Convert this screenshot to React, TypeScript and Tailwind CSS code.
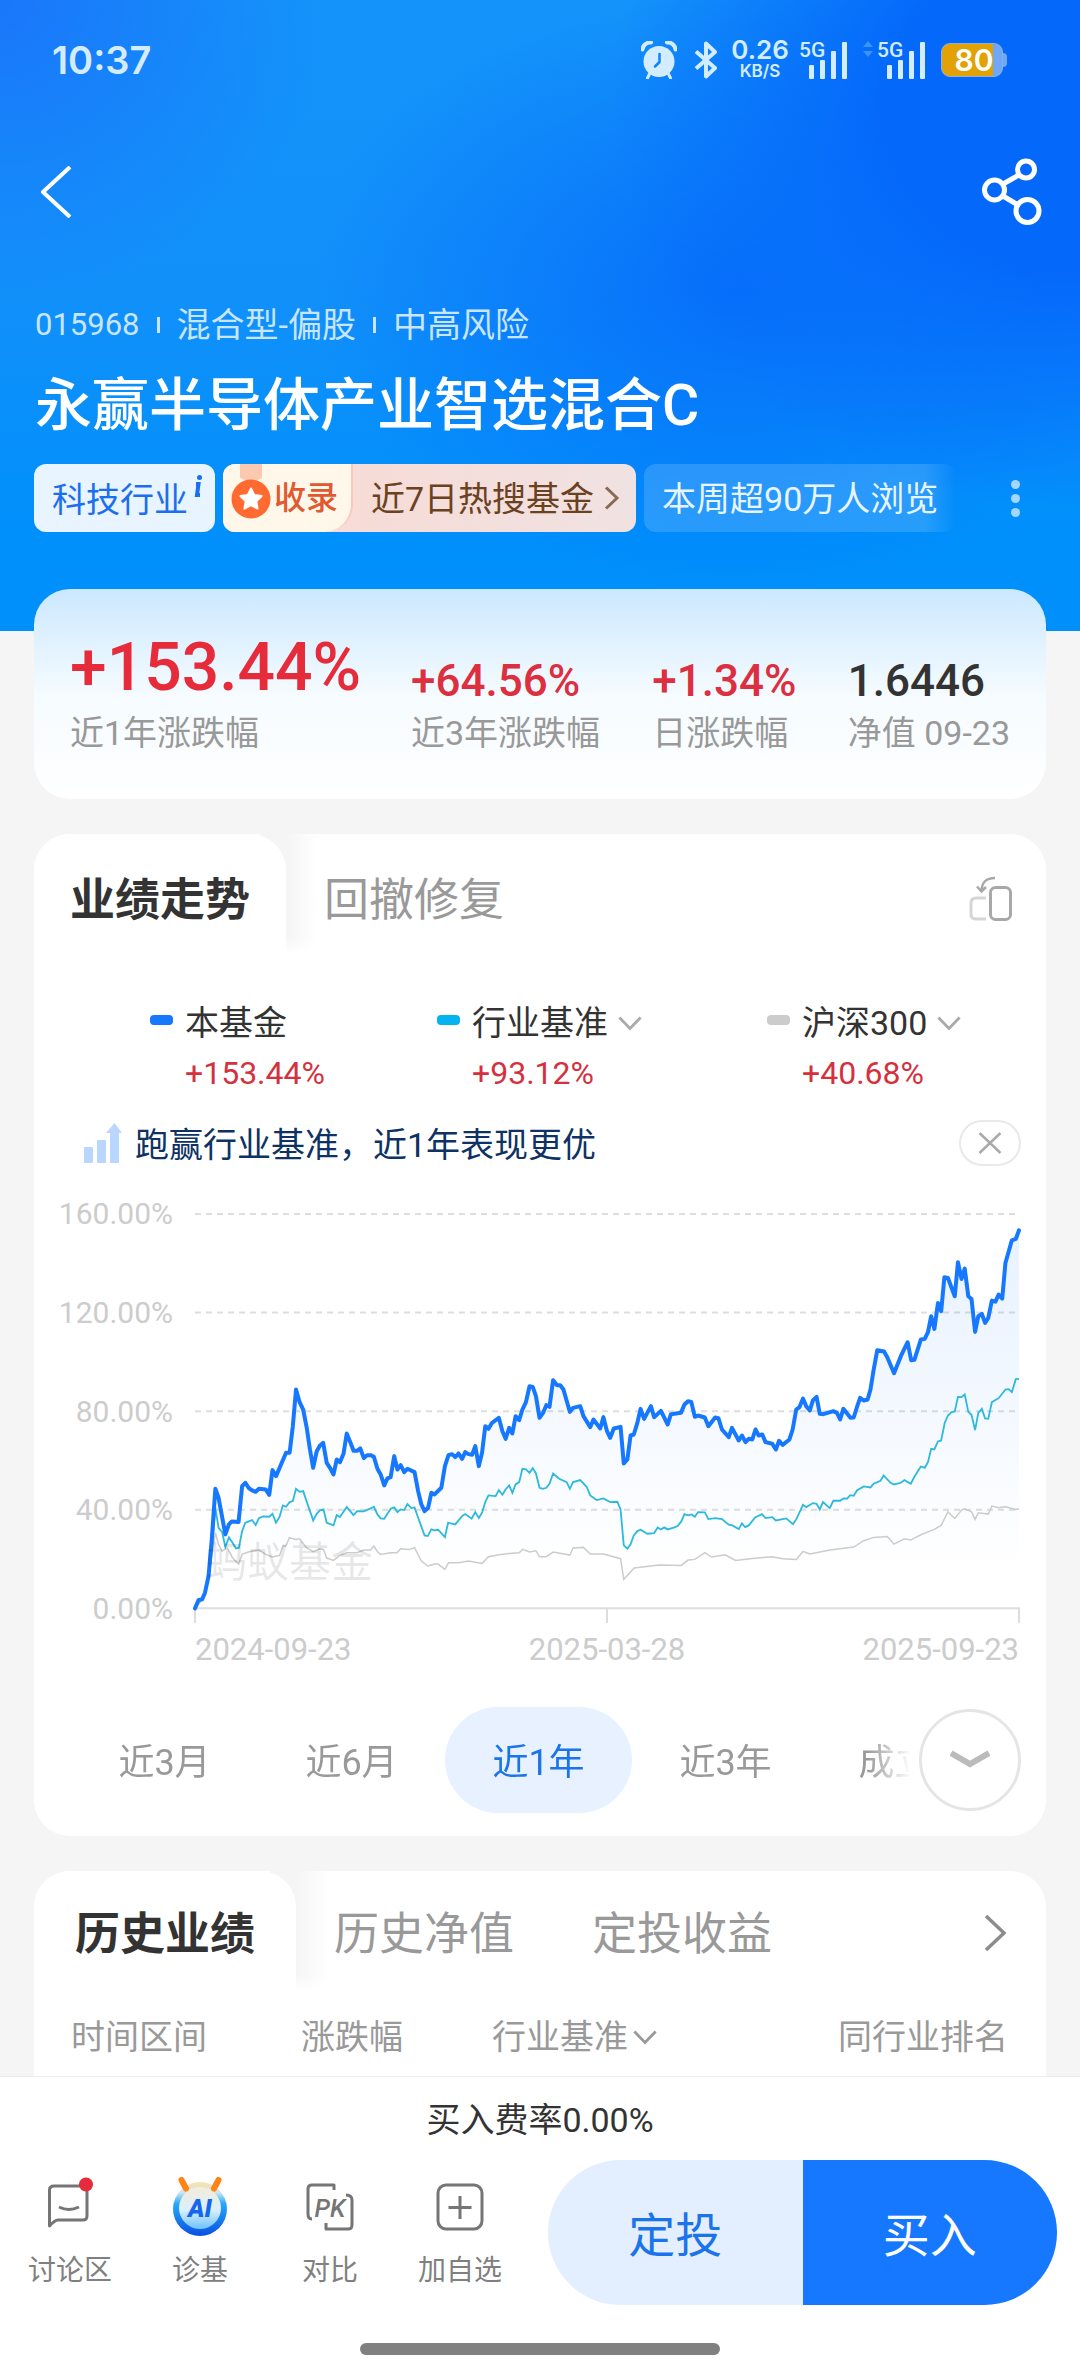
import React from 'react';
import clsx from 'clsx';

const FUND_LINE =
  '0,1287 10,1262 20,1260 28,1240 38,1190 47,1080 57,928 66,955 85,1065 95,1035 103,1026 122,1028 132,920 141,910 150,925 160,933 170,937 179,928 198,930 208,946 217,872 227,890 255,820 265,820 274,740 283,630 293,668 303,690 313,745 322,810 331,865 341,815 350,798 359,790 369,850 378,865 388,885 397,840 406,848 416,823 425,762 435,788 444,814 454,814 463,807 473,836 482,827 492,827 501,832 511,868 520,885 530,918 539,897 548,893 558,830 567,870 576,857 586,878 595,868 615,878 625,935 634,975 643,995 653,985 662,940 671,945 690,925 700,860 710,827 720,824 729,833 738,822 748,838 757,818 766,824 776,826 785,800 795,860 804,820 813,740 822,748 832,730 851,715 861,755 870,778 880,745 889,762 898,710 908,722 917,690 927,668 937,620 946,622 955,650 965,715 975,700 984,677 993,682 1003,602 1014,617 1023,617 1032,630 1050,697 1059,685 1079,680 1088,710 1107,743 1116,720 1135,747 1144,713 1154,755 1163,775 1173,747 1192,742 1201,852 1211,840 1220,768 1229,765 1239,730 1248,688 1258,718 1277,680 1286,713 1305,694 1324,735 1333,704 1361,700 1371,675 1381,665 1390,667 1400,712 1409,708 1428,714 1438,740 1457,714 1466,716 1476,750 1495,773 1504,745 1523,783 1532,768 1542,788 1551,778 1561,780 1570,750 1579,768 1589,765 1598,788 1617,793 1627,810 1636,784 1646,796 1665,780 1674,750 1684,690 1693,683 1703,657 1712,680 1722,693 1731,662 1741,652 1750,703 1760,704 1788,695 1798,700 1807,720 1816,688 1836,715 1845,714 1855,680 1863,655 1873,663 1884,660 1892,630 1901,570 1911,512 1930,516 1939,533 1958,581 1977,530 1996,488 2006,542 2015,541 2033,480 2044,478 2053,458 2062,410 2071,448 2081,370 2090,395 2099,293 2109,295 2128,350 2137,248 2147,298 2156,267 2166,350 2175,358 2185,457 2194,410 2204,403 2213,430 2222,415 2232,363 2242,366 2251,345 2261,357 2270,250 2288,182 2299,178 2308,152';

const INDUSTRY_LINE =
  '0,1287 10,1265 20,1262 28,1245 38,1195 47,1120 57,985 66,1045 76,1058 85,1103 95,1074 105,1090 115,1107 123,1105 132,1055 141,1030 160,1022 170,1037 179,1016 190,1011 208,1012 217,1003 227,1030 237,1012 246,978 255,982 265,968 274,965 283,928 293,937 303,935 313,967 331,1023 341,1003 350,993 360,990 369,1030 388,1038 397,1007 406,1013 425,983 444,1007 454,995 473,996 492,987 501,982 511,1005 520,1017 530,1018 548,988 558,984 567,998 576,990 586,992 595,974 606,986 615,984 625,1015 643,1068 652,1070 662,1050 671,1053 681,1051 700,1073 709,1030 729,1035 748,1010 757,1004 775,1018 785,998 795,1016 804,1000 813,968 822,948 842,950 851,932 861,946 870,930 880,918 889,940 898,915 908,908 917,868 927,870 937,880 946,866 955,882 965,925 975,928 984,925 993,913 1003,882 1020,898 1041,908 1050,928 1059,908 1079,902 1097,922 1107,948 1125,962 1144,957 1163,968 1183,967 1192,990 1201,1098 1211,1108 1220,1095 1229,1068 1239,1055 1248,1051 1267,1063 1286,1061 1296,1044 1305,1050 1314,1044 1324,1050 1343,1044 1352,1040 1362,1026 1371,1004 1381,1008 1391,1005 1400,1012 1409,998 1428,999 1438,1019 1457,1016 1476,1019 1495,1036 1505,1038 1523,1049 1532,1032 1541,1043 1551,1038 1569,1014 1588,1004 1598,1016 1617,1013 1627,1023 1646,1019 1656,1017 1675,1034 1684,1020 1703,976 1712,983 1731,971 1741,973 1750,990 1759,968 1778,986 1788,964 1807,964 1816,957 1826,958 1835,947 1845,949 1854,933 1873,921 1892,924 1901,913 1920,904 1929,888 1948,910 1958,915 1977,910 1987,902 2005,913 2015,892 2033,861 2044,865 2053,848 2062,808 2071,810 2081,786 2090,783 2100,730 2109,708 2119,698 2128,696 2137,652 2147,653 2156,645 2166,697 2175,706 2185,752 2194,700 2204,688 2213,717 2222,718 2232,668 2251,656 2270,630 2279,629 2288,638 2299,599 2308,598';

const CSI300_LINE =
  '0,1287 20,1262 38,1200 47,1130 57,1060 66,1095 76,1115 90,1105 105,1135 122,1154 132,1125 151,1117 179,1112 198,1125 217,1133 237,1128 246,1100 255,1100 264,1075 283,1080 293,1078 312,1105 331,1117 350,1108 360,1110 369,1136 388,1143 406,1128 425,1120 454,1120 473,1112 492,1112 501,1100 511,1117 520,1125 548,1120 566,1120 576,1108 600,1110 615,1105 634,1145 652,1160 671,1154 681,1154 700,1170 710,1150 738,1150 766,1145 804,1152 822,1132 851,1126 880,1122 908,1120 918,1110 937,1118 955,1114 965,1132 984,1132 1003,1118 1050,1127 1059,1106 1088,1104 1107,1124 1144,1124 1192,1138 1201,1200 1230,1166 1300,1157 1362,1158 1381,1142 1400,1140 1428,1120 1447,1133 1485,1126 1514,1143 1561,1137 1617,1132 1646,1138 1684,1140 1703,1116 1722,1124 1779,1112 1845,1103 1873,1084 1901,1074 1939,1071 1958,1094 1987,1078 2005,1082 2033,1066 2071,1050 2090,1038 2109,997 2128,1017 2147,992 2156,988 2175,997 2185,1020 2194,1000 2222,1004 2232,980 2251,985 2270,982 2299,990 2308,988';

const STATS = [
  { value: '+64.56%', label: '近3年涨跌幅', color: 'text-[#dc2f3f]' },
  { value: '+1.34%', label: '日涨跌幅', color: 'text-[#dc2f3f]' },
  { value: '1.6446', label: '净值 09-23', color: 'text-[#333333]' }
];

const LEGEND = [
  { name: '本基金', value: '+153.44%', mark: 'bg-[#1677ff]', menu: false },
  { name: '行业基准', value: '+93.12%', mark: 'bg-[#04b4f0]', menu: true },
  { name: '沪深300', value: '+40.68%', mark: 'bg-[#cccccc]', menu: true }
];

const Y_LABELS = ['160.00%', '120.00%', '80.00%', '40.00%', '0.00%'];
const GRID_Y = [103, 399, 695, 991];
const DATES = ['2024-09-23', '2025-03-28', '2025-09-23'];
const RANGES = ['近3月', '近6月', '近1年', '近3年', '成立来'];

const SignalBars: React.FC = () => (
  <svg width="38" height="37" viewBox="0 0 38 37" fill="currentColor" aria-hidden="true">
    <rect x="0" y="23" width="5" height="14" rx="1" />
    <rect x="11" y="18" width="5" height="19" rx="1" />
    <rect x="22" y="9" width="5" height="28" rx="1" />
    <rect x="33" y="0" width="5" height="37" rx="1" />
  </svg>
);

const Signal: React.FC = () => (
  <div className="relative w-[48px] pl-[10px]">
    <span className="absolute left-0 -top-[2px] text-[21px] leading-5 font-medium">5G</span>
    <SignalBars />
  </div>
);

const StatusBar: React.FC = () => (
  <div className="flex h-[120px] items-center justify-between pl-[52px] pr-[73px] text-[#d4ecff]">
    <span className="font-[Inter] text-[38px] leading-[48px] font-semibold">10:37</span>
    <div className="flex items-center">
      <svg width="36" height="38" viewBox="0 0 36 38" fill="none" aria-hidden="true">
        <circle cx="18" cy="20.500" r="15.500" fill="currentColor" />
        <path d="M1.500 8.500C2 4 6 1 10 1.500M34.500 8.500C34 4 30 1 26 1.500" stroke="currentColor" strokeWidth="4" strokeLinecap="round" />
        <path d="M8.500 33l-2 4M27.500 33l2 4" stroke="currentColor" strokeWidth="3" strokeLinecap="round" />
        <path d="M18.500 13v8l-4.500 4.500" stroke="#0d84fb" strokeWidth="2.500" strokeLinecap="round" strokeLinejoin="round" />
      </svg>
      <svg className="ml-[17px]" width="24" height="38" viewBox="0 0 24 38" fill="none" stroke="currentColor" strokeWidth="4" strokeLinejoin="round" aria-hidden="true">
        <path d="M2 10.500L21 27 12 35.500V2.500L21 11 2 27.500" />
      </svg>
      <div className="ml-[12px] flex w-[60px] flex-col items-center font-[Inter]">
        <span className="text-[26px] leading-[22px] font-semibold">0.26</span>
        <span className="text-[17px] leading-5 font-semibold">KB/S</span>
      </div>
      <div className="ml-[9px]">
        <Signal />
      </div>
      <svg className="ml-[16px] mb-[22px]" width="10" height="16" viewBox="0 0 10 16" fill="#3d94ff" aria-hidden="true">
        <path d="M5 0l5 6H0zM5 16l5-6H0z" />
      </svg>
      <div className="ml-[4px]">
        <Signal />
      </div>
      <div className="ml-[16px] flex items-center">
        <div className="flex h-[34px] w-[62px] items-center justify-center rounded-[9px] border border-[#8fb0d8] bg-linear-to-r from-[#e2a205] from-85% to-[#6fa8f8] to-85% pl-[4px] font-[Inter] text-[30px] leading-8 font-semibold text-white">
          80
        </div>
        <div className="h-[14px] w-[4px] rounded-r-full bg-[#6fa8f8]" />
      </div>
    </div>
  </div>
);

const ChevronDown: React.FC<{ className?: string }> = ({ className }) => (
  <svg className={className} width="24" height="15" viewBox="0 0 26 16" fill="none" stroke="currentColor" strokeWidth="3" aria-hidden="true">
    <path d="M1.500 1.500L13 13.500 24.500 1.500" />
  </svg>
);

const FundHeader: React.FC = () => (
  <header className="bg-[#0090fb] bg-[radial-gradient(ellipse_330px_300px_at_0%_0%,#1a76fa_0%,#1a7cfa00_100%),radial-gradient(ellipse_470px_400px_at_100%_17%,#0468fa_40%,#0468fa00_100%),radial-gradient(ellipse_420px_300px_at_68%_46%,#0468fad0_0%,#0468fa00_100%),linear-gradient(180deg,#1494fa_0%,#1290fa_45%,#0090fb_85%)] pb-[99px] text-white">
    <StatusBar />
    <nav className="flex h-[144px] items-center justify-between pl-[40px] pr-[38px]">
      <button type="button" aria-label="返回">
        <svg width="32" height="52" viewBox="0 0 32 52" fill="none" stroke="currentColor" strokeWidth="4" strokeLinejoin="round">
          <path d="M30 1L3 26l27 25" />
        </svg>
      </button>
      <button type="button" aria-label="分享">
        <svg width="60" height="68" viewBox="0 0 60 68" fill="none" stroke="currentColor" strokeWidth="5">
          <circle cx="44" cy="11.500" r="8.500" />
          <circle cx="12.500" cy="32" r="10" />
          <circle cx="45.500" cy="53" r="11.500" />
          <path d="M21 26l16-9M21 38l15 9" />
        </svg>
      </button>
    </nav>
    <div className="mt-9 flex items-center gap-[17px] pl-[35px] text-[34px] leading-[50px] text-[#c9e5ff]">
      <span className="text-[31px]">015968</span>
      <span className="h-[16px] w-[3px] bg-[#c9e5ff]" />
      <span>混合型-偏股</span>
      <span className="h-[16px] w-[3px] bg-[#c9e5ff]" />
      <span>中高风险</span>
    </div>
    <h1 className="mt-[18px] pl-[35px] text-[57px] leading-[76px] font-medium">永赢半导体产业智选混合C</h1>
    <div className="mt-[20px] flex items-center justify-between pl-[34px] pr-[60px] text-[34px] whitespace-nowrap">
      <div className="flex h-[68px] items-stretch gap-[8px]">
        <button type="button" className="flex w-[181px] rounded-[12px] bg-[#e8f4ff] pl-[18px] leading-[72px] text-[#1b6fee]">
          科技行业
          <svg className="mt-[11px] ml-[5px]" width="10" height="22" viewBox="0 0 10 22" fill="none" stroke="currentColor" aria-hidden="true">
            <circle cx="6.500" cy="2.500" r="2.500" fill="currentColor" stroke="none" />
            <path d="M3 9h2.500L4 20h3" strokeWidth="4" />
          </svg>
        </button>
        <button type="button" className="flex items-center overflow-hidden rounded-[12px] bg-linear-to-r from-[#fad9d2] to-[#f0e2e2] pr-[16px] leading-[50px] text-[#6b421f]">
          <span className="flex h-full w-[130px] items-center rounded-br-[28px] border-r-2 border-[#f8c9c0] bg-[#fff7ea] pl-[8px] text-[32px] font-medium text-[#e0592f]">
            <svg width="40" height="68" viewBox="0 0 40 68" aria-hidden="true">
              <path d="M9 0h22v14q-11 6-22 0z" fill="#fcc9b0" />
              <circle cx="20" cy="35" r="19.500" fill="#ff6a30" />
              <path d="M20 24.500l3.300 6.600 7.300 1-5.300 5.200 1.300 7.300-6.600-3.500-6.600 3.500 1.300-7.300-5.300-5.200 7.300-1z" fill="#fff" stroke="#fff" strokeWidth="2" strokeLinejoin="round" />
            </svg>
            <span className="ml-[3px]">收录</span>
          </span>
          <span className="ml-[18px] pt-[2px]">近7日热搜基金</span>
          <svg className="ml-[10px]" width="16" height="24" viewBox="0 0 16 24" fill="none" stroke="#8a6a52" strokeWidth="3" aria-hidden="true">
            <path d="M2 1.500L13 12 2 22.500" />
          </svg>
        </button>
        <span className="rounded-[12px] bg-linear-to-r from-white/15 from-90% to-white/0 px-[18px] leading-[70px] text-[#e8f5ff]">本周超90万人浏览</span>
      </div>
      <button type="button" aria-label="更多" className="flex flex-col gap-[5px]">
        <span className="size-[9px] rounded-full bg-[#a5d6ff]" />
        <span className="size-[9px] rounded-full bg-[#a5d6ff]" />
        <span className="size-[9px] rounded-full bg-[#a5d6ff]" />
      </button>
    </div>
  </header>
);

const StatsCard: React.FC = () => (
  <section className="relative mx-[34px] -mt-[42px] grid grid-cols-[342fr_242fr_196fr_160fr] items-end rounded-[36px] bg-linear-to-b from-[#cbe8ff] via-[#f5fbff] via-50% to-white pt-[42px] pr-[36px] pb-[42px] pl-[36px] whitespace-nowrap">
    <div className="flex flex-col gap-1">
      <span className="text-[66px] leading-[74px] font-medium text-[#e62c3b]">+153.44%</span>
      <span className="text-[34px] leading-[48px] text-[#999999]">近1年涨跌幅</span>
    </div>
    {STATS.map((stat) => (
      <div key={stat.label} className="flex flex-col gap-1">
        <span className={clsx('text-[44px] leading-[48px] font-medium', stat.color)}>{stat.value}</span>
        <span className="text-[34px] leading-[48px] text-[#999999]">{stat.label}</span>
      </div>
    ))}
  </section>
);

interface TabHeadProps {
  active: string;
  others: string[];
  activeClass: string;
  children: React.ReactNode;
}

const TabHead: React.FC<TabHeadProps> = ({ active, others, activeClass, children }) => (
  <div className="flex items-stretch text-[45px]">
    <button type="button" className={clsx('relative z-10 rounded-t-[36px] bg-white pt-[4px] font-bold text-[#333333]', activeClass)}>
      {active}
    </button>
    <span className="-ml-[26px] h-[120px] w-[58px] shrink-0 rounded-br-[20px] bg-linear-to-r from-[#f5f5f5] from-45% to-white [mask-image:linear-gradient(to_top,transparent,black_16px)]" />
    <div className="flex flex-1 items-center gap-[78px] pt-[4px] pl-[6px] text-[#999999]">
      {others.map((name) => (
        <button key={name} type="button">
          {name}
        </button>
      ))}
    </div>
    <div className="flex items-center">{children}</div>
  </div>
);

const TrendChart: React.FC = () => (
  <div className="mt-[33px] flex gap-[22px] pr-[27px] text-[30px] text-[#cccccc]">
    <div className="flex h-[425px] w-[139px] shrink-0 flex-col justify-between text-right leading-[30px]">
      {Y_LABELS.map((label) => (
        <span key={label}>{label}</span>
      ))}
    </div>
    <div className="relative flex-1 pt-[15px]">
      <svg className="block h-[409px] w-full overflow-visible" viewBox="0 103 2308 1228" preserveAspectRatio="none" fill="none" role="img" aria-label="业绩走势">
        <defs>
          <linearGradient id="fundArea" x1="0" y1="152" x2="0" y2="1287" gradientUnits="userSpaceOnUse">
            <stop offset="0" stopColor="#1677ff" stopOpacity="0.1" />
            <stop offset="0.900" stopColor="#1677ff" stopOpacity="0" />
          </linearGradient>
        </defs>
        {GRID_Y.map((y) => (
          <line key={y} x1="0" x2="2308" y1={y} y2={y} stroke="#dddddd" strokeWidth="2" strokeDasharray="6 5" vectorEffect="non-scaling-stroke" />
        ))}
        <path d="M0 1331V1287H2308V1331M1154 1287V1331" stroke="#dddddd" strokeWidth="2" vectorEffect="non-scaling-stroke" />
        <polygon points={`${FUND_LINE} 2308,1287`} fill="url(#fundArea)" />
        <polyline points={CSI300_LINE} stroke="#cccccc" strokeWidth="1.500" vectorEffect="non-scaling-stroke" />
        <polyline points={INDUSTRY_LINE} stroke="#2cb9dc" strokeWidth="1.800" vectorEffect="non-scaling-stroke" />
        <polyline points={FUND_LINE} stroke="#1677ff" strokeWidth="4" strokeLinecap="round" strokeLinejoin="round" vectorEffect="non-scaling-stroke" />
      </svg>
      <span className="absolute bottom-[82px] left-[10px] text-[42px] leading-[48px] text-black/10">蚂蚁基金</span>
      <div className="mt-2 flex justify-between text-[31px] leading-[38px]">
        {DATES.map((date) => (
          <span key={date}>{date}</span>
        ))}
      </div>
    </div>
  </div>
);

const TrendCard: React.FC = () => {
  const [range, setRange] = React.useState('近1年');
  const [tipOpen, setTipOpen] = React.useState(true);

  return (
    <section className="mx-[34px] mt-[35px] rounded-[36px] bg-white pb-[23px]">
      <TabHead active="业绩走势" others={['回撤修复']} activeClass="h-[130px] w-[252px]">
        <button type="button" aria-label="横屏" className="mr-[33px]">
          <svg width="44" height="46" viewBox="0 0 44 46" fill="none" stroke="#a8a8a8" strokeWidth="3">
            <rect x="21.500" y="11.500" width="20" height="32" rx="5" />
            <path d="M17 22H7q-5 0-5 5v11q0 5 5 5h10" stroke="#d5d5d5" />
            <path d="M26 2C17 2 13 6 12.500 15M8 10.500l4.500 5 4.500-4.500" strokeWidth="2.500" />
          </svg>
        </button>
      </TabHead>

      <div className="mt-[35px] grid grid-cols-[287fr_330fr_245fr] pl-[116px] pr-[34px] whitespace-nowrap">
        {LEGEND.map((item) => (
          <div key={item.name} className="flex">
            <span className={clsx('mt-[16px] mr-[12px] h-[10px] w-[23px] rounded-[4px]', item.mark)} />
            <div>
              {item.menu ? (
                <button type="button" className="flex items-center text-[34px] leading-[48px] text-[#333333]">
                  {item.name}
                  <ChevronDown className="ml-[10px] text-[#aaaaaa]" />
                </button>
              ) : (
                <span className="block text-[34px] leading-[48px] text-[#333333]">{item.name}</span>
              )}
              <span className="mt-1 block text-[32px] leading-[44px] text-[#d5303e]">{item.value}</span>
            </div>
          </div>
        ))}
      </div>

      {tipOpen && (
        <div className="mt-[25px] flex h-[46px] items-center pl-[50px] pr-[25px]">
          <svg width="38" height="40" viewBox="0 0 38 40" fill="#b9d6ff" aria-hidden="true">
            <rect x="0" y="24" width="9" height="16" rx="1" />
            <rect x="13" y="17" width="9" height="23" rx="1" />
            <path d="M26 40V10h-4l8.500-10L38 10h-3v30z" />
          </svg>
          <p className="ml-[13px] flex-1 pt-[4px] text-[34px] leading-[46px] text-[#0d3263]">跑赢行业基准，近1年表现更优</p>
          <button
            type="button"
            aria-label="关闭"
            className="flex h-[46px] w-[62px] items-center justify-center rounded-full border-2 border-[#e6ebe6]"
            onClick={() => setTipOpen(false)}
          >
            <svg width="24" height="22" viewBox="0 0 24 22" fill="none" stroke="#aaaaaa" strokeWidth="2.500">
              <path d="M1.500 1l21 20M22.500 1l-21 20" />
            </svg>
          </button>
        </div>
      )}

      <TrendChart />

      <div className="mt-[38px] flex items-center pl-[37px] pr-[25px]">
        <div className="flex min-w-0 flex-1 overflow-hidden text-[36px] whitespace-nowrap [mask-image:linear-gradient(to_left,transparent_8px,black_52px)]">
          {RANGES.map((name) => (
            <button
              key={name}
              type="button"
              className={clsx('h-[106px] w-[187px] shrink-0 rounded-full pt-[6px]', name === range ? 'bg-[#e7f1ff] text-[#1b74ea]' : 'text-[#999999]')}
              onClick={() => setRange(name)}
            >
              {name}
            </button>
          ))}
        </div>
        <button type="button" aria-label="更多区间" className="flex size-[102px] shrink-0 items-center justify-center rounded-full border-3 border-[#e5e5e5]">
          <svg width="40" height="20" viewBox="0 0 40 20" fill="none" stroke="#bbbbbb" strokeWidth="6">
            <path d="M1 3l19 11L39 3" />
          </svg>
        </button>
      </div>
    </section>
  );
};

const HistoryCard: React.FC = () => (
  <section className="mx-[34px] mt-[35px] flex-1 rounded-t-[36px] bg-white">
    <TabHead active="历史业绩" others={['历史净值', '定投收益']} activeClass="h-[124px] w-[262px]">
      <button type="button" aria-label="查看全部" className="mr-[39px]">
        <svg width="24" height="38" viewBox="0 0 24 38" fill="none" stroke="#8c8c8c" strokeWidth="3.500">
          <path d="M3 2l18 17L3 36" />
        </svg>
      </button>
    </TabHead>
    <div className="mt-[18px] pl-[37px] pr-[38px]">
      <table className="w-full table-fixed text-left text-[34px] leading-[48px] whitespace-nowrap text-[#999999]">
        <thead>
          <tr>
            <th className="w-[230px] p-0 font-normal">时间区间</th>
            <th className="w-[191px] p-0 font-normal">涨跌幅</th>
            <th className="p-0 font-normal">
              <button type="button" className="flex items-center">
                行业基准
                <ChevronDown className="ml-[5px]" />
              </button>
            </th>
            <th className="p-0 text-right font-normal">同行业排名</th>
          </tr>
        </thead>
      </table>
    </div>
  </section>
);

interface ActionProps {
  label: string;
  children: React.ReactNode;
}

const Action: React.FC<ActionProps> = ({ label, children }) => (
  <button type="button" className="flex flex-1 flex-col items-center gap-[14px] pt-[2px] text-[28px] leading-10 text-[#808080]">
    <svg width="60" height="60" viewBox="0 0 60 60" fill="none" stroke="#757575" strokeWidth="3" strokeLinejoin="round" aria-hidden="true">
      {children}
    </svg>
    {label}
  </button>
);

const BottomBar: React.FC = () => (
  <footer className="sticky bottom-0 z-20 border-t border-[#ececec] bg-white pt-[21px] pb-[21px]">
    <p className="text-center text-[34px] leading-[44px] text-[#333333]">买入费率0.00%</p>
    <div className="mt-[18px] flex items-center pl-[5px] pr-[23px] whitespace-nowrap">
      <div className="flex flex-1">
        <Action label="讨论区">
          <path d="M14 9h29q4 0 4 4v26q0 4-4 4H18q-3 0-8.500 6V13q0-4 4.500-4z" />
          <path d="M19 30q9.500 5 20 0" />
          <circle cx="46" cy="7.500" r="7" fill="#e52b3c" stroke="none" />
        </Action>
        <Action label="诊基">
          <defs>
            <linearGradient id="aiRing" x1="0" y1="0" x2="0" y2="1">
              <stop offset="0" stopColor="#ffe2a8" />
              <stop offset="0.200" stopColor="#c9e6ee" />
              <stop offset="0.400" stopColor="#28a8fa" />
              <stop offset="1" stopColor="#0a4fe0" />
            </linearGradient>
            <linearGradient id="aiFace" x1="0" y1="0" x2="0" y2="1">
              <stop offset="0" stopColor="#f5ecd9" />
              <stop offset="0.550" stopColor="#d9effc" />
              <stop offset="1" stopColor="#6cc2ff" />
            </linearGradient>
          </defs>
          <circle cx="30" cy="32" r="27" fill="url(#aiRing)" stroke="none" />
          <circle cx="30" cy="31" r="21" fill="url(#aiFace)" stroke="none" />
          <path d="M11.500 3L16 11.500M48.500 3L44 11.500" stroke="#ff8414" strokeWidth="6" strokeLinecap="round" />
          <text x="30" y="40" textAnchor="middle" fontSize="25" fontWeight="900" fontStyle="italic" fill="#1565ee" stroke="none">
            AI
          </text>
        </Action>
        <Action label="对比">
          <path d="M34 13V8H12q-4 0-4 4v25q0 5 4 5M46 18q6 0 6 5v25q0 4-4 4H26v-6" />
          <text x="30" y="40" textAnchor="middle" fontSize="25" fontWeight="500" fontStyle="italic" fill="#757575" stroke="none">
            PK
          </text>
        </Action>
        <Action label="加自选">
          <rect x="8" y="8" width="44" height="44" rx="8" />
          <path d="M30 19v23M18.500 30.500h23" />
        </Action>
      </div>
      <div className="ml-[23px] flex h-[145px] w-[49%] max-w-[509px] overflow-hidden rounded-full text-[47px]">
        <button type="button" className="flex-1 bg-[#e3eeff] pt-[8px] text-[#1b74ea]">
          定投
        </button>
        <button type="button" className="flex-1 bg-[#1677ff] pt-[8px] text-white">
          买入
        </button>
      </div>
    </div>
    <div className="mx-auto mt-[38px] h-[12px] w-1/3 rounded-full bg-[#808080]" />
  </footer>
);

export default function App() {
  return (
    <div className="flex min-h-screen flex-col bg-[#f5f5f5] font-[Roboto,'Noto_Sans_CJK_SC',sans-serif]">
      <FundHeader />
      <StatsCard />
      <TrendCard />
      <HistoryCard />
      <BottomBar />
    </div>
  );
}
